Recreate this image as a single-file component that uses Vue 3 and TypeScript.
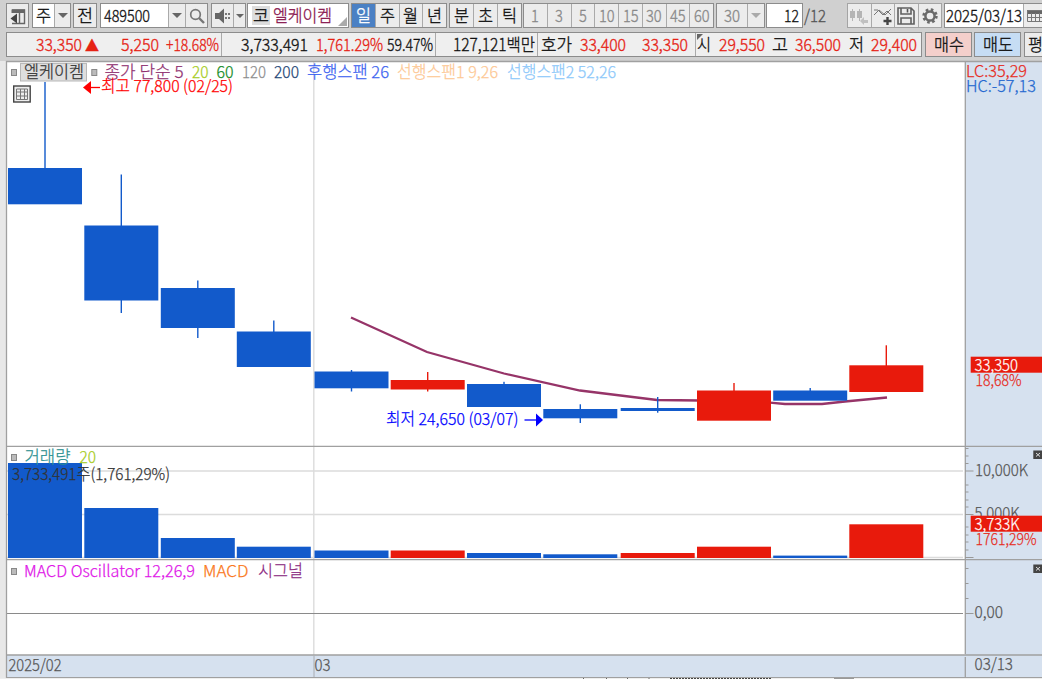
<script setup lang="ts">
import { h, type FunctionalComponent } from 'vue'

// Condensed label: the text is fitted to an exact width.
const Fit: FunctionalComponent<{ t: string; w: number }> = (p) =>
  h('svg', { class: 'fit', width: p.w, height: 20 }, [
    h('text', { x: 0, y: 16, textLength: p.w, lengthAdjust: 'spacingAndGlyphs' }, p.t),
  ])
Fit.props = ['t', 'w']

interface Quote { t: string; w: number; gap: number; c?: string }
const quotes: Quote[][] = [
  [{ t: '33,350', w: 46, gap: 29, c: 'up' }, { t: '▲', w: 14, gap: 3, c: 'up tri' }, { t: '5,250', w: 38, gap: 22, c: 'up' }, { t: '+18.68%', w: 53, gap: 7, c: 'up' }],
  [{ t: '3,733,491', w: 67, gap: 19 }, { t: '1,761.29%', w: 67, gap: 8, c: 'up' }, { t: '59.47%', w: 46, gap: 4 }],
  [{ t: '127,121백만', w: 82, gap: 17 }],
  [{ t: '호가', w: 31, gap: 3 }, { t: '33,400', w: 46, gap: 8, c: 'up' }, { t: '33,350', w: 46, gap: 16, c: 'up' }],
  [{ t: '시', w: 14, gap: 1 }, { t: '29,550', w: 46, gap: 8, c: 'up' }, { t: '고', w: 16, gap: 7 }, { t: '36,500', w: 46, gap: 7, c: 'up' }, { t: '저', w: 15, gap: 8 }, { t: '29,400', w: 46, gap: 7, c: 'up' }],
]
const cellWidths = [214, 214, 102, 158, 226]

const minutes = ['1', '3', '5', '10', '15', '30', '45', '60']

interface Candle { x: number; top: number; bottom: number; hi: number; lo: number; vol: number; up?: boolean }
const candles: Candle[] = [
  { x: 8, top: 168, bottom: 204.3, hi: 82, lo: 204, vol: 463 },
  { x: 84.3, top: 225.5, bottom: 300.5, hi: 174.5, lo: 313, vol: 508 },
  { x: 160.8, top: 288, bottom: 328, hi: 280.5, lo: 338, vol: 538 },
  { x: 236.8, top: 331.5, bottom: 367, hi: 320.5, lo: 367, vol: 546.7 },
  { x: 314.5, top: 371.5, bottom: 388.3, hi: 370, lo: 391.5, vol: 550.5 },
  { x: 390.7, top: 380, bottom: 389.5, hi: 372, lo: 391.5, vol: 550.5, up: true },
  { x: 467, top: 384, bottom: 407, hi: 381.8, lo: 407, vol: 553 },
  { x: 543.3, top: 409, bottom: 418.3, hi: 404.3, lo: 423, vol: 554.3 },
  { x: 620.7, top: 408, bottom: 411, hi: 397, lo: 412.7, vol: 553 },
  { x: 697, top: 390.5, bottom: 420.7, hi: 383, lo: 420, vol: 546.7, up: true },
  { x: 773.2, top: 390.5, bottom: 400.7, hi: 388, lo: 400, vol: 555.6 },
  { x: 849.3, top: 365.3, bottom: 392, hi: 345.3, lo: 391, vol: 524.3, up: true },
]
// The ninth day's volume bar is red although its candle closed below the open.
const volumeUp = (c: Candle, i: number): boolean => c.up === true || i === 8

interface Label { t: string; x: number; y: number; w: number; c: string }
const labels: Label[] = [
  { t: '엘케이켐', x: 24, y: 78, w: 60, c: '#333' },
  { t: '종가 단순 5', x: 104.5, y: 78, w: 79, c: '#903070' },
  { t: '20', x: 192, y: 78, w: 16.5, c: '#a6cc1c' },
  { t: '60', x: 216.5, y: 78, w: 17, c: '#118a22' },
  { t: '120', x: 242, y: 78, w: 24, c: '#8c8c8c' },
  { t: '200', x: 274, y: 78, w: 25, c: '#1c4474' },
  { t: '후행스팬 26', x: 307, y: 78, w: 82, c: '#3b62f0' },
  { t: '선행스팬1 9,26', x: 397, y: 78, w: 101, c: '#fdc894' },
  { t: '선행스팬2 52,26', x: 507, y: 78, w: 109, c: '#8cc8fa' },
  { t: '최고 77,800 (02/25)', x: 101, y: 92, w: 132, c: '#ff0000' },
  { t: '최저 24,650 (03/07)', x: 386, y: 424.5, w: 132.5, c: '#0000ff' },
  { t: '거래량', x: 24.5, y: 463, w: 46, c: '#2a9090' },
  { t: '20', x: 79.5, y: 463, w: 16.5, c: '#a6cc1c' },
  { t: '3,733,491주(1,761,29%)', x: 12, y: 479.5, w: 158, c: '#333' },
  { t: 'MACD Oscillator 12,26,9', x: 24, y: 577, w: 171, c: '#e014e8' },
  { t: 'MACD', x: 203, y: 577, w: 45.5, c: '#fa7820' },
  { t: '시그널', x: 258, y: 577, w: 45, c: '#8c2a82' },
  { t: '2025/02', x: 8.5, y: 670.5, w: 53, c: '#555' },
  { t: '03', x: 314.5, y: 670.5, w: 16, c: '#555' },
  { t: '03/13', x: 974.5, y: 670, w: 38.5, c: '#555' },
  { t: 'LC:35,29', x: 966, y: 76.5, w: 61, c: '#e62a20' },
  { t: 'HC:-57,13', x: 966, y: 92, w: 70, c: '#2468d0' },
  { t: '18,68%', x: 975.5, y: 385.5, w: 46, c: '#e62a20' },
  { t: '10,000K', x: 975, y: 475.5, w: 53, c: '#555' },
  { t: '5,000K', x: 974.5, y: 518.5, w: 45, c: '#555' },
  { t: '1761,29%', x: 975.5, y: 544.5, w: 61, c: '#e62a20' },
  { t: '0,00', x: 974.5, y: 618, w: 28.5, c: '#555' },
]
const tags: Label[] = [
  { t: '33,350', x: 974.5, y: 370.5, w: 43.5, c: '#fff' },
  { t: '3,733K', x: 974.5, y: 529.5, w: 45, c: '#fff' },
]
const minorTicks = [448.5, 456, 463.5, 485, 492, 500, 507, 527, 535, 542, 550, 568.5, 583.5, 598.5]
const majorTicks = [471, 514.5, 557.5, 613.5]
const squares = [[11, 69], [91.3, 69], [11, 454], [11, 568]]
</script>

<template>
  <div class="app">
    <header class="toolbar">
      <div class="box w23">
        <svg width="21" height="22" viewBox="0 0 21 22"><path d="M5 5h12.500v13.500H5" fill="none" stroke="#666" stroke-width="1.400"/><path d="M4.500 4.500h13.500v3.500H4.500z" fill="#666"/><path d="M12.500 7v11" stroke="#666" stroke-width="1.400"/><path d="M3.500 13.500l6.500-5v10z" fill="#444"/></svg>
      </div>
      <div class="box w39 g3"><span class="part white w21"><Fit t="주" :w="15" /></span><span class="part grow"><i class="caret" /></span></div>
      <div class="box w24 g2"><Fit t="전" :w="16" /></div>
      <div class="box w108 g3">
        <span class="part white code"><Fit t="489500" :w="46" /></span><span class="part w17"><i class="caret" /></span>
        <span class="part grow"><svg width="18" height="18" viewBox="0 0 18 18"><circle cx="7.500" cy="7.500" r="4.800" fill="none" stroke="#777" stroke-width="1.700"/><path d="M11 11l5 5" stroke="#777" stroke-width="2.400"/></svg></span>
      </div>
      <div class="box w35 g3">
        <span class="part w21"><svg width="18" height="18" viewBox="0 0 18 18"><path d="M1 6h4l5-4.500v15L5 12H1z" fill="#666"/><path d="M11 6h2v2h-2zM11 10h2v2h-2zM14 6h2v2h-2zM14 10h2v2h-2z" fill="#777"/></svg></span>
        <span class="part grow"><i class="caret small" /></span>
      </div>
      <div class="box white name g1"><span class="badge"><Fit t="코" :w="16" /></span><Fit class="plum" t="엘케이켐" :w="59" /><i class="corner" /></div>
      <div class="box w96 g2"><span v-for="(p, i) in ['일', '주', '월', '년']" :key="p" class="part even" :class="{ on: i === 0 }"><Fit :t="p" :w="15" /></span></div>
      <div class="box w73 g2"><span v-for="p in ['분', '초', '틱']" :key="p" class="part even"><Fit :t="p" :w="15" /></span></div>
      <div class="box w191 g1 dim"><span v-for="m in minutes" :key="m" class="part even"><Fit :t="m" :w="m.length * 7.800" /></span></div>
      <div class="box w49 g2 dim"><span class="part w30"><Fit t="30" :w="16" /></span><span class="part grow"><i class="caret pale" /></span></div>
      <div class="box white w37 g1 count"><Fit t="12" :w="15" /></div>
      <Fit class="total" t="/12" :w="22" />
      <div class="box w95 tools">
        <span class="part even"><svg width="22" height="22" viewBox="0 0 22 22"><path d="M4.500 4v12M11.500 4v12" stroke="#b5b5b5"/><path d="M2 6h5v7H2zM9 6h5v7H9z" fill="#b5b5b5"/><path d="M12 16l4-4v3h4v3h-4v2z" fill="#c0c0c0"/></svg></span>
        <span class="part even"><svg width="22" height="22" viewBox="0 0 22 22"><path d="M2 10l5-5 6 5 6-6M2 5l4 0 5 5 4-4 4 4" fill="none" stroke="#777"/><path d="M15.500 12v8M11.500 16h8" stroke="#444" stroke-width="2.400"/></svg></span>
        <span class="part even"><svg width="22" height="22" viewBox="0 0 22 22"><path d="M3 3h13l3 3v13H3zM6 3v6h10V3M6 19v-6h10v6" fill="none" stroke="#606060" stroke-width="1.600"/><path d="M12.500 4v3.500" stroke="#555" stroke-width="1.600"/></svg></span>
        <span class="part even"><svg width="22" height="22" viewBox="0 0 22 22"><circle cx="11" cy="11" r="6.300" fill="none" stroke="#6a6a6a" stroke-width="2.800" stroke-dasharray="2.500 2.450"/><circle cx="11" cy="11" r="4.600" fill="none" stroke="#6a6a6a" stroke-width="2.500"/></svg></span>
      </div>
      <div class="box w110 g2"><span class="part white date"><Fit t="2025/03/13" :w="76" /></span>
        <span class="part grow cal"><svg width="22" height="18" viewBox="0 0 22 18"><path d="M3 3h16v4H3z" fill="#666"/><path d="M3.500 3.500h15v11h-15zM3.500 10.500h15M7.500 6v8M11.500 6v8M15.500 6v8" fill="none" stroke="#777"/></svg></span></div>
    </header>

    <section class="quotes">
      <div class="box panel">
        <div v-for="(cell, i) in quotes" :key="i" class="cell" :style="{ width: cellWidths[i] + 'px' }">
          <Fit v-for="(q, j) in cell" :key="j" :t="q.t" :w="q.w" :class="q.c" :style="{ marginLeft: q.gap + 'px' }" />
          <i v-if="i === 4" class="fold" />
        </div>
      </div>
      <div class="box buy g3"><Fit t="매수" :w="30" /></div>
      <div class="box sell g2"><Fit t="매도" :w="30" /></div>
      <div class="box avg g3"><Fit t="평" :w="15" /></div>
    </section>

    <svg class="chart" width="1042" height="619" viewBox="0 60 1042 619">
      <rect x="0" y="60" width="1042" height="619" fill="#e8e8e8" />
      <rect x="0" y="60" width="1042" height="1" fill="#d0d0d0" />
      <rect x="6" y="61" width="1036" height="617" fill="#fff" />
      <rect x="965" y="62" width="77" height="616" fill="#d6e1ef" />
      <rect x="7" y="655" width="958" height="23" fill="#d6e1ef" />
      <path d="M7 471H963M7 514.500H963M7 557.500H963M313.800 62V655" stroke="#dcdcdc" stroke-width="1.400" fill="none" />
      <path d="M314 656V677" stroke="#a8acb2" />
      <path d="M7 613.500H963" stroke="#8a8a8a" stroke-width="1.200" />

      <rect v-for="(c, i) in candles" :key="'v' + i" :x="c.x" :y="c.vol" width="74" :height="558 - c.vol" :class="volumeUp(c, i) ? 'rise' : 'fall'" />
      <polyline points="351,317.500 427,352 504,373.500 580,390.500 657,400 700,400.500 770,402.700 785,404 822,404 845,401.500 887,397.500" fill="none" stroke="#963468" stroke-width="2.300" />
      <g v-for="(c, i) in candles" :key="'c' + i" :class="c.up ? 'rise' : 'fall'">
        <rect :x="c.x + 36.300" :y="c.hi" width="1.400" :height="c.lo - c.hi" />
        <rect :x="c.x" :y="c.top" width="74" :height="c.bottom - c.top" />
      </g>

      <path d="M6.500 678V61.500H1042M7 446.300H1042M7 559.600H1042M7 655H1042M6.500 677.700H1042M965.300 62V654M965.300 657V677" fill="none" stroke="#a0a0a0" stroke-width="1.300" />
      <path v-for="y in minorTicks" :key="y" :d="`M965 ${y}h3.500`" stroke="#999" />
      <path v-for="y in majorTicks" :key="y" :d="`M965 ${y}h8.500`" stroke="#999" />

      <rect x="20.500" y="63.500" width="66" height="17.500" fill="#dedede" stroke="#b8b8b8" />
      <rect v-for="(s, i) in squares" :key="'s' + i" :x="s[0]! + 0.500" :y="s[1]! + 0.500" width="5" height="6" fill="#bbb" stroke="#888" />
      <g fill="none" stroke="#444"><rect x="13.700" y="86" width="16.500" height="16" fill="#eee" stroke-width="1.400" /><path d="M16.500 89h11v10.500h-11zM16.500 92h11M16.500 96h11M20.500 89v10.500M24.500 89v10.500" stroke="#777" /></g>
      <path d="M83 87.500l8-6.500v13z" fill="#f00" /><path d="M90 87.500h10" stroke="#f00" stroke-width="1.300" />
      <path d="M543 420l-7-6.500v13z" fill="#00f" /><path d="M524.500 420h12" stroke="#00f" stroke-width="1.300" />

      <text v-for="(l, i) in labels" :key="'l' + i" :x="l.x" :y="l.y" :fill="l.c" :stroke="l.c" :textLength="l.w" lengthAdjust="spacingAndGlyphs">{{ l.t }}</text>
      <g v-for="l in tags" :key="l.t">
        <rect x="970.700" :y="l.y - 13.800" width="72" height="16" fill="#e81a0c" />
        <text :x="l.x" :y="l.y" :fill="l.c" :stroke="l.c" :textLength="l.w" lengthAdjust="spacingAndGlyphs">{{ l.t }}</text>
      </g>
      <g v-for="y in [450.500, 564.500]" :key="'x' + y"><rect x="1033.300" :y="y" width="9" height="8.500" fill="#444" /><path :d="`M1036 ${y + 2.500}l4 3.500M1040 ${y + 2.500}l-4 3.500`" stroke="#ddd" /></g>
      <rect x="0" y="678" width="1042" height="1" fill="#eee" />
      <path d="M670 678.500H771" stroke="#444" stroke-dasharray="2 1" /><path d="M834 678.500h20" stroke="#999" /><path d="M583.500 678v1M606.500 678v1M627.500 678v1M649 678v1" stroke="#666" />
    </svg>
  </div>
</template>

<style>
body { overflow: hidden; }
</style>
<style scoped>
.app { width: 1042px; height: 679px; overflow: hidden; background: #d0d0d0; font-family: "Noto Sans CJK KR", sans-serif; font-weight: 300; }
.toolbar, .quotes { display: flex; box-sizing: border-box; padding-left: 6px; width: 1160px; }
.toolbar { height: 32px; padding-top: 3px; }
.quotes { height: 28px; }
.box { box-sizing: border-box; flex: none; height: 25px; display: flex; align-items: center; justify-content: center; border: 1px solid #8c8c8c; background: #ececec; color: #111; }
.part { box-sizing: border-box; height: 100%; display: flex; align-items: center; justify-content: center; border-left: 1px solid #aaa; }
.part:first-child { border-left: 0; }
.even { flex: 1; }
.grow { flex: 1; }
.white { background: #fff; }
.on { background: #4a80c4; color: #fff; }
.dim { color: #888; }
.w17 { width: 17px; } .w21 { width: 21px; } .w23 { width: 23px; } .w24 { width: 24px; } .w30 { width: 30px; }
.w35 { width: 35px; } .w37 { width: 37px; } .w39 { width: 39px; } .w49 { width: 49px; } .w73 { width: 73px; }
.w95 { width: 95px; } .w96 { width: 96px; } .w108 { width: 108px; } .w110 { width: 110px; } .w191 { width: 191px; }
.g1 { margin-left: 1px; } .g2 { margin-left: 2px; } .g3 { margin-left: 3px; }
.fit { display: block; flex: none; overflow: visible; font-size: 17px; fill: currentColor; stroke: currentColor; stroke-width: 0.35px; }
.code { width: 67px; justify-content: flex-start; padding-left: 3px; }
.name { width: 102px; justify-content: flex-start; padding-left: 4px; position: relative; }
.badge { background: #ddd; width: 18px; height: 19px; display: flex; align-items: center; justify-content: center; margin-right: 3px; }
.plum { color: #8a1850; }
.corner { position: absolute; right: 1px; bottom: 1px; border-left: 9px solid transparent; border-bottom: 9px solid #aaa; }
.caret { border: 5px solid transparent; border-top-color: #666; border-bottom: 0; }
.caret.small { border-width: 4px; border-bottom: 0; }
.caret.pale { border-top-color: #aaa; }
.count { justify-content: flex-end; padding-right: 3px; }
.total { margin: 3px 21px 0 1px; color: #555; }
.tools { border-color: #a4a4a4; }
.date { width: 78px; }
.cal { justify-content: flex-start; }
.panel { width: 916px; justify-content: flex-start; background: #efefef; }
.cell { box-sizing: border-box; height: 100%; display: flex; align-items: center; position: relative; border-left: 1px solid #aaa; }
.cell:first-child { border-left: 0; }
.up { color: #e62214; }
.tri { font-size: 15px; }
.fold { position: absolute; left: 1px; top: 1px; border-top: 6px solid #666; border-right: 6px solid transparent; }
.buy { width: 47px; background: #f4cfcb; }
.sell { width: 47px; background: #c6ddf4; }
.avg { width: 47px; justify-content: flex-start; padding-left: 3px; }
.chart { display: block; font-size: 16.5px; }
.chart text { stroke-width: 0.25px; }
.rise { fill: #e81a0c; }
.fall { fill: #125acb; }
</style>
